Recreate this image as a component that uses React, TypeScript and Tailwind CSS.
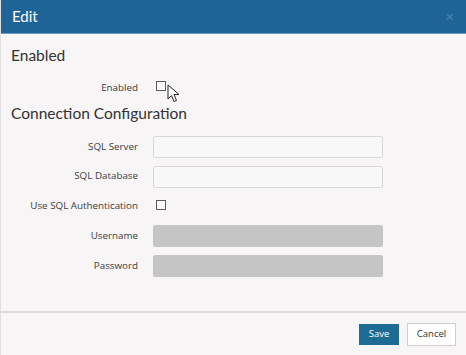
import React from "react";

const font = { fontFamily: '"Open Sans", "Noto Sans", sans-serif' };
const headFont = { fontFamily: 'Lato, "Open Sans", sans-serif' };

function Checkbox() {
  return <div className="w-[10px] h-[10px] border border-[#5a5a5a] bg-[#fbfafa]" />;
}

function FieldRow({ label, children }: { label: string; children: React.ReactNode }) {
  return (
    <div className="flex items-center h-[29.75px]">
      <div className="w-[137px] text-right text-[9.8px] text-[#3c3c3c]">{label}</div>
      <div className="ml-[15px] flex items-center">{children}</div>
    </div>
  );
}

function TextInput({ disabled }: { disabled?: boolean }) {
  return (
    <input
      type="text"
      disabled={disabled}
      className={
        disabled
          ? "w-[230px] h-[22px] rounded-[2px] bg-[#c6c5c6] border border-[#c6c5c6]"
          : "w-[230px] h-[22px] rounded-[2px] bg-[#f9f8f8] border border-[#d9d8d8]"
      }
    />
  );
}

export default function App() {
  return (
    <div style={font} className="w-[466px] h-[355px] bg-[#f7f5f6] flex flex-col border-l border-[#dedede] relative">
      <div className="h-[34px] bg-[#1e6497] border-b border-[#6a9cc2] flex items-center justify-between pl-[11px] pr-[12px]">
        <span style={headFont} className="text-white text-[15px] leading-none">Edit</span>
        <span className="text-[#4f84ae] text-[11px] leading-none">✕</span>
      </div>

      <div className="flex-1 pl-[10px]">
        <div style={headFont} className="text-[15.5px] text-[#333] leading-[18px] mt-[12px]">Enabled</div>
        <div className="-ml-[10px] mt-[13px] flex items-center h-[20px]">
          <div className="w-[137px] text-right text-[9.8px] text-[#3c3c3c] mt-[2px]">Enabled</div>
          <div className="ml-[18px] -mt-[3px]">
            <Checkbox />
          </div>
        </div>
        <div style={headFont} className="text-[15.5px] text-[#333] leading-[18px] mt-[7px]">Connection Configuration</div>
        <div className="-ml-[10px] mt-[10px]">
          <FieldRow label="SQL Server">
            <TextInput />
          </FieldRow>
          <FieldRow label="SQL Database">
            <TextInput />
          </FieldRow>
          <FieldRow label="Use SQL Authentication">
            <div className="ml-[3px] -mt-[3px]">
              <Checkbox />
            </div>
          </FieldRow>
          <FieldRow label="Username">
            <TextInput disabled />
          </FieldRow>
          <FieldRow label="Password">
            <TextInput disabled />
          </FieldRow>
        </div>
      </div>

      <div className="h-[44px] border-t-2 border-[#dcdcdc] flex items-center justify-end gap-[8px] pr-[10px]">
        <button className="w-[40px] h-[21px] bg-[#1e6b93] text-white text-[9.5px]">Save</button>
        <button className="w-[49px] h-[23px] bg-white border border-[#cfcfcf] text-[#333] text-[9.5px]">Cancel</button>
      </div>

      <svg className="absolute left-[166px] top-[84px]" width="14" height="20" viewBox="0 0 14 20">
        <path d="M1 1 L1 15 L4.5 11.5 L7 17.5 L9.5 16.5 L7 10.5 L12 10.5 Z" fill="#fff" stroke="#222" strokeWidth="1" strokeLinejoin="round" />
      </svg>
    </div>
  );
}
